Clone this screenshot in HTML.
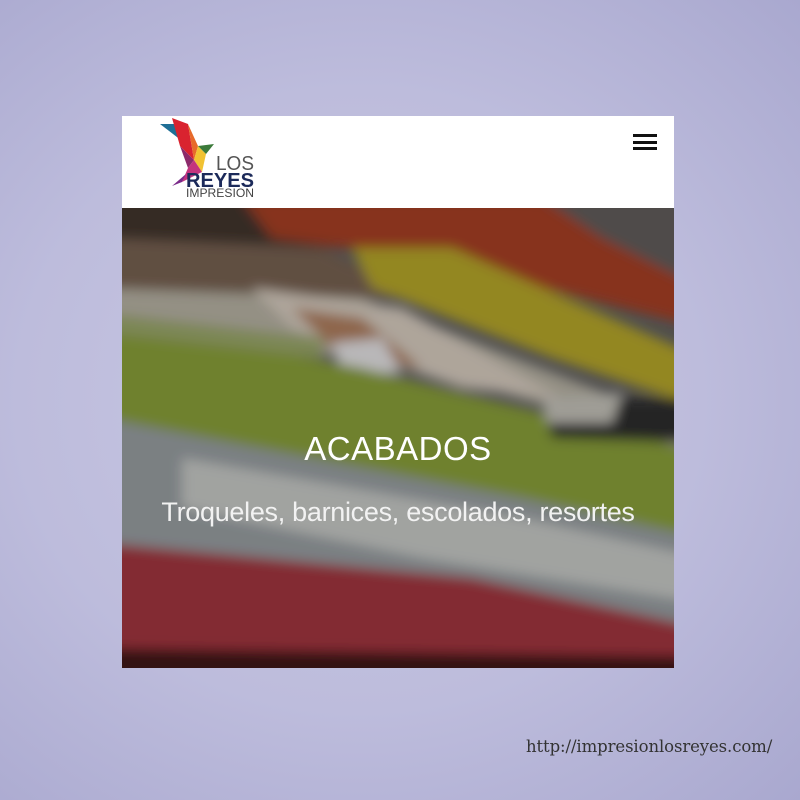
<!DOCTYPE html>
<html><head><meta charset="utf-8"><style>
html,body{margin:0;padding:0;width:800px;height:800px;overflow:hidden}
body{background:radial-gradient(ellipse at 45% 50%,#c9c8e2 0%,#bdbcdc 55%,#a9a8cf 100%);position:relative;font-family:"Liberation Sans",sans-serif}
.card{position:absolute;left:122px;top:116px;width:552px;height:552px;background:#fff}
.hdr{position:absolute;left:0;top:0;width:552px;height:92px;background:#fff}
.img{position:absolute;left:0;top:92px;width:552px;height:460px;overflow:hidden}
.t1{position:absolute;left:0;width:552px;top:222px;text-align:center;color:#fff;font-size:33px;letter-spacing:0.5px}
.t2{position:absolute;left:0;width:552px;top:289px;text-align:center;color:#f2f2f2;font-size:27px;letter-spacing:-0.3px}
.url{position:absolute;left:526px;top:737px;font-family:"DejaVu Serif",serif;font-size:16.5px;color:#333;letter-spacing:-0.1px}
.hb{position:absolute;left:511px;width:24px;height:3px;background:#111}
</style></head><body>
<div class="card">
 <div class="hdr">
  <svg width="100" height="90" style="position:absolute;left:36px;top:0">
   <polygon points="2,8 20,8 28,28" fill="#1f6f96"/>
   <polygon points="14,2 30,8 36,44 22,30" fill="#d9232f"/>
   <polygon points="30,8 40,30 36,44" fill="#e76a2a"/>
   <polygon points="36,44 40,30 48,38 44,56" fill="#f1c232"/>
   <polygon points="40,30 56,28 48,38" fill="#3b7a3a"/>
   <polygon points="22,30 36,44 30,52" fill="#8c2a6b"/>
   <polygon points="30,52 36,44 44,56 24,66" fill="#c4337e"/>
   <polygon points="24,66 14,70 28,58" fill="#7b2a8a"/>
   <text x="58" y="54" font-family="Liberation Sans" font-size="20" fill="#555" textLength="38" lengthAdjust="spacingAndGlyphs">LOS</text>
   <text x="28" y="71" font-family="Liberation Sans" font-size="20" font-weight="bold" fill="#1c2a5a" textLength="68" lengthAdjust="spacingAndGlyphs">REYES</text>
   <text x="28" y="81" font-family="Liberation Sans" font-size="12" fill="#444" textLength="68" lengthAdjust="spacingAndGlyphs">IMPRESION</text>
  </svg>
  <div class="hb" style="top:18px"></div><div class="hb" style="top:25px"></div><div class="hb" style="top:31px"></div>
 </div>
 <div class="img">
  <svg width="552" height="460" viewBox="0 0 552 460">
   <defs><filter id="b" x="-10%" y="-10%" width="120%" height="120%"><feGaussianBlur stdDeviation="6"/></filter></defs>
   <rect width="552" height="460" fill="#5b5a5a"/>
   <g filter="url(#b)">
    <polygon points="-20,-20 580,-20 580,40 -20,40" fill="#3d302b"/>
    <polygon points="120,-10 420,-10 580,70 580,120 300,50 150,30" fill="#9a3a20"/>
    <polygon points="-20,30 200,40 300,90 -20,90" fill="#6e5a4c"/>
    <polygon points="230,40 330,40 580,150 580,200 430,150 250,80" fill="#a89a28"/>
    <polygon points="420,-10 580,-10 580,80 480,30" fill="#5a5655"/>
    <polygon points="-20,80 240,90 560,215 560,240 300,160 -20,115" fill="#a9a497"/>
    <polygon points="130,80 280,100 440,190 340,180 170,120" fill="#c6bcb0"/>
    <polygon points="170,100 240,110 300,160 220,150" fill="#a27456"/>
    <polygon points="210,135 260,130 280,165 220,165" fill="#d3d1d3"/>
    <polygon points="-20,110 240,160 580,245 580,330 400,290 -20,210" fill="#7f9334"/>
    <polygon points="-20,105 200,130 200,150 -20,125" fill="#8e9a62"/>
    <polygon points="420,190 580,190 580,235 430,230" fill="#2a2a2a"/>
    <polygon points="420,190 500,185 490,215 425,215" fill="#b5b3ab"/>
    <polygon points="-20,210 400,290 580,330 580,420 350,370 -20,335" fill="#8c9295"/>
    <polygon points="60,250 400,310 580,350 580,395 300,350 60,300" fill="#b8bab7"/>
    <polygon points="-20,335 350,370 580,420 580,450 -20,450" fill="#96323a"/>
    <polygon points="-20,440 560,448 580,480 -20,480" fill="#3a1515"/>
   </g>
   <rect width="552" height="460" fill="rgba(0,0,0,0.12)"/>
  </svg>
  <div class="t1">ACABADOS</div>
  <div class="t2">Troqueles, barnices, escolados, resortes</div>
 </div>
</div>
<div class="url">http://impresionlosreyes.com/</div>
</body></html>
